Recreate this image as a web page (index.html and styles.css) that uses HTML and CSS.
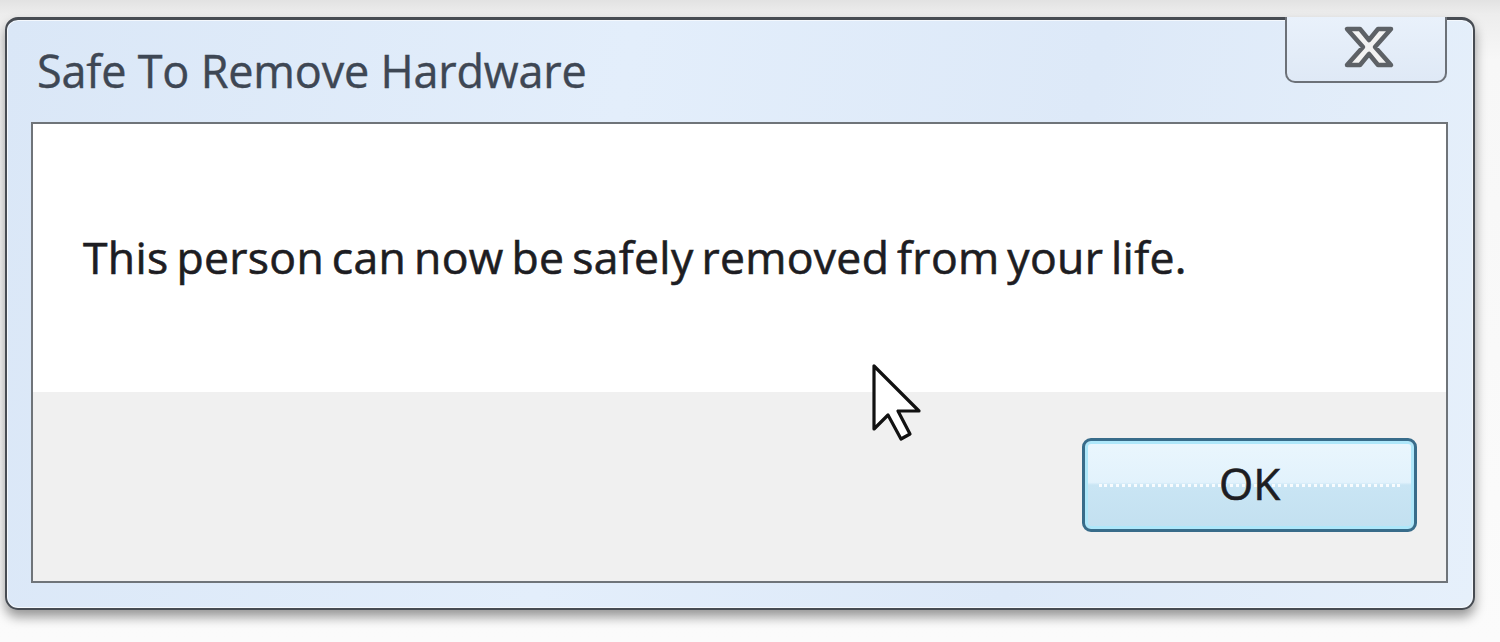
FILE: index.html
```html
<!DOCTYPE html>
<html lang="en">
<head>
<meta charset="utf-8">
<title>Safe To Remove Hardware</title>
<link rel="stylesheet" href="styles.css">
</head>
<body>
<div class="stage">
  <div class="window">
    <div class="titlebar">
      <div class="title">Safe To Remove Hardware</div>
      <div class="close-btn">
        <svg class="close-x" width="52" height="42" viewBox="0 0 52 42" aria-hidden="true">
          <polygon points="4,3 17,3 26,14 35,3 48,3 32,21 48,39 35,39 26,28 17,39 4,39 20,21" fill="#f3f3f3" stroke="#5d6166" stroke-width="4.5" stroke-linejoin="round"/>
        </svg>
      </div>
    </div>
    <div class="panel">
      <div class="message">
        <p class="text">This person can now be safely removed from your life.</p>
      </div>
      <div class="footer">
        <button class="ok-btn"><span class="ok-label">OK</span></button>
      </div>
    </div>
  </div>
  <svg class="cursor" width="52" height="80" viewBox="0 0 52 80" aria-hidden="true">
    <path d="M3,3 L3,66 L17,52 L30,76 L39,71 L27,48 L48,48 Z" fill="#ffffff" stroke="#111111" stroke-width="3.2" stroke-linejoin="round"/>
  </svg>
</div>
</body>
</html>
```
FILE: styles.css
```css
html, body {
  margin: 0;
  padding: 0;
}
body {
  width: 1500px;
  height: 642px;
  overflow: hidden;
  background: linear-gradient(to bottom, #e2e2e2 0px, #ededed 14px, #f7f7f7 60px, #fbfbfb 100%);
  font-family: "Open Sans", "Noto Sans", "DejaVu Sans", sans-serif;
}
.stage {
  position: relative;
  padding: 17px 0 0 5px;
}
.window {
  box-sizing: border-box;
  width: 1470px;
  height: 593px;
  border: 2px solid #474c53;
  border-top-width: 3px;
  border-radius: 13px;
  background: linear-gradient(100deg, #dae7f7 0%, #e3eefb 40%, #dde9f8 70%, #e6f0fb 100%);
  box-shadow: 0 7px 12px rgba(0,0,0,0.4), inset 0 0 0 1px #f4f8fd;
  display: flex;
  flex-direction: column;
  padding: 0 25px 25px 24px;
}
.titlebar {
  height: 102px;
  display: flex;
  justify-content: space-between;
  align-items: flex-start;
}
.title {
  margin-top: 25px;
  margin-left: 6px;
  font-size: 45px;
  line-height: 52px;
  color: #3e4754;
  letter-spacing: -0.2px;
  -webkit-text-stroke: 0.4px #3e4754;
}
.close-btn {
  box-sizing: border-box;
  width: 162px;
  height: 66px;
  margin-right: 1px;
  margin-top: -3px;
  border: 2px solid #6c7178;
  border-top: none;
  border-radius: 0 0 10px 10px;
  background: linear-gradient(to bottom, #e9f1fb, #dfe9f6);
  display: flex;
  justify-content: center;
  align-items: flex-start;
  padding-top: 9px;
  padding-left: 6px;
}
.close-x {
  display: block;
}
.panel {
  flex: 1;
  box-sizing: border-box;
  border: 2px solid #6f7479;
  display: flex;
  flex-direction: column;
  background: #f0f0f0;
}
.message {
  height: 268px;
  background: #ffffff;
  padding-left: 50px;
  box-sizing: border-box;
  padding-top: 103px;
}
.text {
  margin: 0;
  font-size: 44.5px;
  line-height: 60px;
  color: #1d1d22;
  letter-spacing: 0.32px;
  word-spacing: -4px;
  -webkit-text-stroke: 0.6px #1d1d22;
}
.footer {
  flex: 1;
  display: flex;
  justify-content: flex-end;
  align-items: flex-start;
  padding-top: 46px;
  padding-right: 29px;
}
.ok-btn {
  box-sizing: border-box;
  width: 335px;
  height: 94px;
  border: 3px solid #386c8a;
  border-radius: 9px;
  background: linear-gradient(to bottom, #eaf6fd 0%, #e2f2fc 47%, #c9e5f4 50%, #c3e0f0 100%);
  box-shadow: inset 0 0 0 3px #aee7fa;
  padding: 0;
  font-family: "Open Sans", "Noto Sans", "DejaVu Sans", sans-serif;
  font-size: 44px;
  color: #1d1d22;
  -webkit-text-stroke: 0.6px #1d1d22;
  display: flex;
  justify-content: center;
  align-items: center;
  position: relative;
}
.ok-btn::after {
  content: "";
  position: absolute;
  left: 14px;
  right: 14px;
  top: 43px;
  border-top: 3px dotted rgba(255,255,255,0.85);
}
.ok-label {
  position: relative;
  z-index: 1;
  line-height: 1;
  margin-top: -4px;
}
.cursor {
  position: absolute;
  left: 871px;
  top: 363px;
}
```
